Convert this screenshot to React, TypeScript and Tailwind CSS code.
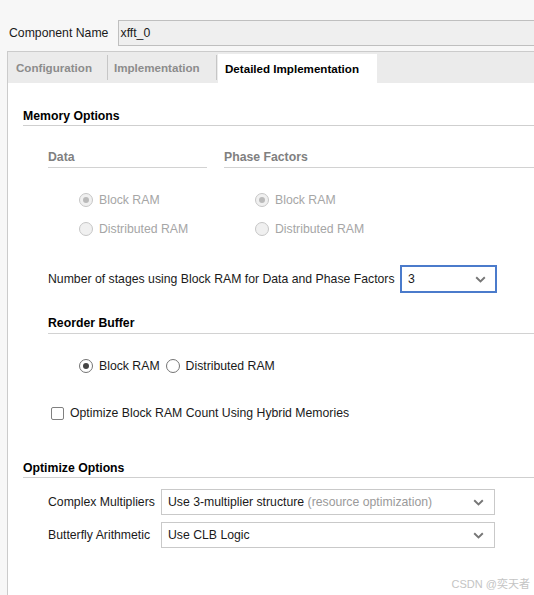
import React from "react";

function Chevron() {
  return (
    <svg width="11" height="7" viewBox="0 0 11 7" className="shrink-0">
      <path d="M1.2 1.2 L5.5 5.4 L9.8 1.2" fill="none" stroke="#767676" strokeWidth="1.9" />
    </svg>
  );
}

function Radio({ checked, disabled, label }: { checked?: boolean; disabled?: boolean; label: string }) {
  const ring = disabled ? "border-[#c6c6c6] bg-[#f0f0f0]" : "border-[#747474] bg-white";
  const dot = disabled ? "bg-[#bababa]" : "bg-[#444444]";
  return (
    <div className="flex items-center gap-[6px] h-[14px]">
      <span className={`w-[14px] h-[14px] rounded-full border flex items-center justify-center shrink-0 ${ring}`}>
        {checked && <span className={`w-[6px] h-[6px] rounded-full ${dot}`} />}
      </span>
      <span className={`leading-[14px] ${disabled ? "text-[#a6a6a6]" : "text-[#1a1a1a]"}`}>{label}</span>
    </div>
  );
}

function SubHeader({ title, muted }: { title: string; muted?: boolean }) {
  return (
    <div
      className={`font-bold leading-[14px] pb-[3px] border-b border-[#d2d2d2] ${
        muted ? "text-[#808080]" : "text-black"
      }`}
    >
      {title}
    </div>
  );
}

function SelectBox({ children, width }: { children: React.ReactNode; width: string }) {
  return (
    <div className={`${width} h-[26px] border border-[#c9c9c9] bg-white flex items-center justify-between pl-[6px] pr-[10px]`}>
      <span className="leading-[14px] text-[#1a1a1a] whitespace-nowrap">{children}</span>
      <Chevron />
    </div>
  );
}

export default function App() {
  return (
    <div className="relative w-[534px] h-[595px] overflow-hidden bg-[#f7f7f7] text-[12.25px] text-[#1a1a1a] font-['Liberation_Sans','Noto_Sans_CJK_SC',sans-serif]">
      {/* component name */}
      <div className="flex items-center pt-[20px]">
        <div className="ml-[9px] w-[108px] shrink-0 leading-[14px]">Component Name</div>
        <div className="ml-[0.5px] w-[440px] h-[26px] shrink-0 border border-[#bfbfbf] bg-[#efefef] flex items-center pl-[2px] leading-[14px]">
          xfft_0
        </div>
      </div>

      {/* tab panel */}
      <div className="mt-[5px] ml-[7px] w-[540px] h-[600px] border-l border-t border-[#cbcbcb] flex flex-col">
        <div className="h-[31px] bg-[#ebebeb] flex items-center shrink-0">
          <div className="w-[99px] pl-[8px] font-bold text-[11.6px] text-[#8c8c8c] leading-[14px]">Configuration</div>
          <div className="w-px h-[25px] bg-[#c6c6c6]" />
          <div className="w-[108px] pl-[6px] font-bold text-[11.6px] text-[#8c8c8c] leading-[14px]">Implementation</div>
          <div className="w-px h-[25px] bg-[#c6c6c6]" />
          <div className="ml-[1px] self-end w-[159px] h-[29px] bg-white pl-[7px] flex items-center font-bold text-[11.6px] text-black">
            Detailed Implementation
          </div>
        </div>

        <div className="flex-1 bg-white pl-[15px] pt-[26px]">
          {/* Memory options */}
          <div className="font-bold leading-[14px] pb-[2px] border-b border-[#cfcfcf] text-black">Memory Options</div>

          <div className="flex mt-[24px] ml-[25px]">
            <div className="w-[159px] shrink-0">
              <SubHeader title="Data" muted />
              <div className="flex flex-col gap-[15px] mt-[25px] pl-[31px]">
                <Radio checked disabled label="Block RAM" />
                <Radio disabled label="Distributed RAM" />
              </div>
            </div>
            <div className="flex-1 ml-[17px]">
              <SubHeader title="Phase Factors" muted />
              <div className="flex flex-col gap-[15px] mt-[25px] pl-[31px]">
                <Radio checked disabled label="Block RAM" />
                <Radio disabled label="Distributed RAM" />
              </div>
            </div>
          </div>

          <div className="flex items-center mt-[29px] ml-[25px]">
            <div className="w-[352px] shrink-0 leading-[14px] whitespace-nowrap">Number of stages using Block RAM for Data and Phase Factors</div>
            <div className="w-[97px] h-[28px] border-2 border-[#4b7bcb] flex items-center justify-between pl-[6px] pr-[9px]">
              <span className="leading-[14px]">3</span>
              <Chevron />
            </div>
          </div>

          <div className="mt-[23px] ml-[25px]">
            <SubHeader title="Reorder Buffer" />
            <div className="flex items-center gap-[6px] mt-[25px] pl-[31px]">
              <Radio checked label="Block RAM" />
              <Radio label="Distributed RAM" />
            </div>
          </div>

          <div className="flex items-center gap-[6px] mt-[33px] ml-[28px]">
            <span className="w-[13px] h-[13px] rounded-[2px] border border-[#808080] bg-white shrink-0" />
            <span className="leading-[14px]">Optimize Block RAM Count Using Hybrid Memories</span>
          </div>

          {/* Optimize options */}
          <div className="mt-[41px] font-bold leading-[14px] pb-[2px] border-b border-[#cfcfcf] text-black">Optimize Options</div>

          <div className="flex flex-col gap-[7px] mt-[11px] ml-[25px]">
            <div className="flex items-center">
              <div className="w-[113px] shrink-0 leading-[14px] whitespace-nowrap">Complex Multipliers</div>
              <SelectBox width="w-[334px]">
                Use 3-multiplier structure <span className="text-[#9a9a9a]">(resource optimization)</span>
              </SelectBox>
            </div>
            <div className="flex items-center">
              <div className="w-[113px] shrink-0 leading-[14px] whitespace-nowrap">Butterfly Arithmetic</div>
              <SelectBox width="w-[334px]">Use CLB Logic</SelectBox>
            </div>
          </div>
        </div>
      </div>

      <div className="absolute right-[4px] bottom-[5px] text-[11px] leading-[12px] text-[#c4c4c4]">CSDN @奕天者</div>
    </div>
  );
}
